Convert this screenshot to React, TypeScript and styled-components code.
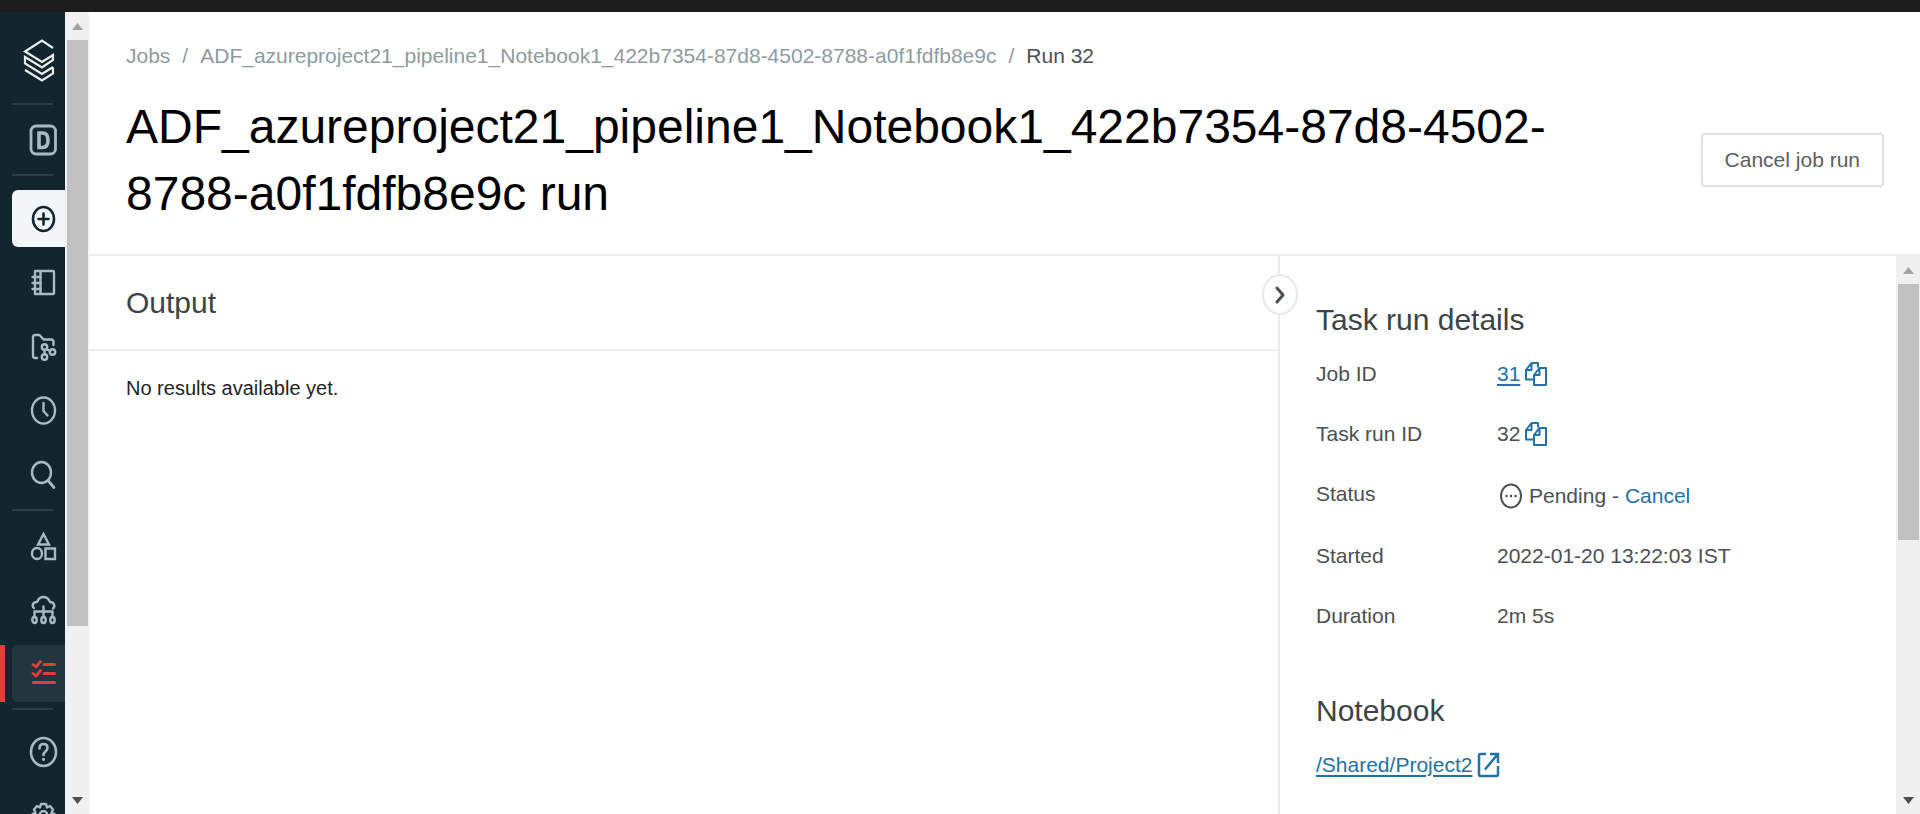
import React from "react";
import styled, { createGlobalStyle, css } from "styled-components";

const GlobalStyle = createGlobalStyle`
  *, *::before, *::after { box-sizing: border-box; }
  html, body { margin: 0; background: #ffffff; }
  body { font-family: "Liberation Sans", Arial, sans-serif; font-size: 21px; line-height: 24px; color: #4b5054; }
  h1, h2, p, dl, dd, ol, ul { margin: 0; padding: 0; }
  ol, ul { list-style: none; }
  svg { display: block; flex: none; }
`;

const Screen = styled.div`
  display: flex;
  flex-direction: column;
  height: 100vh;
  overflow: hidden;
`;

const WindowEdge = styled.div`
  flex: none;
  height: 12px;
  background: #1c1c1c;
`;

const Workspace = styled.div`
  display: flex;
  flex: 1;
  min-height: 0;
`;

const Sidebar = styled.nav`
  flex: none;
  width: 65px;
  overflow: hidden;
  background: #12262f;
`;

const Brand = styled.a`
  display: block;
  padding: 26px 0 20px 22px;
`;

const Rule = styled.hr`
  width: 41px;
  height: 2px;
  margin: 0 0 0 12px;
  border: 0;
  background: #2b3f48;
`;

const NavGroup = styled.ul`
  display: flex;
  flex-direction: column;
  gap: 7px;
  padding: 6px 0;
`;

const CreateGroup = styled(NavGroup)`
  padding: 14px 0 6px;
`;

const HelpGroup = styled(NavGroup)`
  padding-top: 13px;
`;

const NavItem = styled.li<{ $active?: boolean }>`
  padding-left: ${(p) => (p.$active ? 7 : 12)}px;
  border-left: ${(p) => (p.$active ? "5px solid #dc4038" : "0")};
`;

const NavButton = styled.button<{ $tone?: "light" | "active" }>`
  display: flex;
  align-items: center;
  justify-content: flex-start;
  width: 100%;
  height: 57px;
  padding: 0 0 0 17px;
  border: 0;
  border-radius: 6px 0 0 6px;
  background: transparent;
  color: #a9bac2;
  ${(p) => p.$tone === "light" && css`background: #f3f6f8; color: #12262f;`}
  ${(p) => p.$tone === "active" && css`background: #21363f; color: #dc4038;`}
`;

const ScrollRail = styled.div`
  display: flex;
  flex-direction: column;
  flex: none;
  width: 24px;
  background: #f0f0f0;
`;

const ScrollArrow = styled.button`
  display: flex;
  align-items: center;
  justify-content: center;
  height: 28px;
  padding: 0;
  border: 0;
  background: transparent;
`;

const ScrollTrack = styled.div`
  display: flex;
  flex-direction: column;
  flex: 1;
  padding: 0 1px 0 2px;
`;

const Thumb = styled.div<{ $share: number }>`
  flex: ${(p) => p.$share};
  background: #c1c1c1;
`;

const Remainder = styled.div<{ $share: number }>`
  flex: ${(p) => p.$share};
`;

const Page = styled.main`
  display: flex;
  flex-direction: column;
  flex: 1;
  min-width: 0;
`;

const PageHeader = styled.header`
  flex: none;
  padding: 32px 36px 27px 37px;
  border-bottom: 2px solid #ebedee;
`;

const Breadcrumb = styled.ol`
  display: flex;
  gap: 12px;
  color: #8f9b9f;
`;

const CrumbLink = styled.a`
  color: inherit;
  text-decoration: none;
`;

const CurrentCrumb = styled.li`
  color: #4b5054;
`;

const TitleRow = styled.div`
  display: flex;
  align-items: center;
  gap: 120px;
  margin-top: 25px;
`;

const Title = styled.h1`
  flex: 1;
  min-width: 0;
  font-size: 48px;
  font-weight: 400;
  line-height: 67px;
  color: #000000;
`;

const OutlineButton = styled.button`
  flex: none;
  height: 54px;
  padding: 0 22px;
  border: 2px solid #dfe1e2;
  border-radius: 4px;
  background: #ffffff;
  color: #5a5f62;
  font: inherit;
`;

const Panels = styled.div`
  display: flex;
  flex: 1;
  min-height: 0;
`;

const OutputPane = styled.section`
  flex: 1;
  min-width: 0;
`;

const OutputHeader = styled.div`
  padding: 29px 37px 28px;
  border-bottom: 2px solid #ebedee;
`;

const SectionTitle = styled.h2`
  font-size: 30px;
  font-weight: 400;
  line-height: 36px;
  color: #3d4448;
`;

const EmptyMessage = styled.p`
  padding: 25px 37px;
  font-size: 20px;
  color: #1f2326;
`;

const DetailsPane = styled.aside`
  position: relative;
  display: flex;
  flex: none;
  width: 642px;
  border-left: 2px solid #e8eaeb;
`;

const CollapseButton = styled.button`
  position: absolute;
  top: 18px;
  left: -18px;
  display: flex;
  align-items: center;
  justify-content: center;
  width: 36px;
  height: 41px;
  padding: 0;
  border: 2px solid #e6e9ea;
  border-radius: 50%;
  background: #ffffff;
  color: #4b5054;
`;

const DetailsBody = styled.div`
  flex: 1;
  min-width: 0;
  overflow: hidden;
  padding: 46px 36px 0;
`;

const DetailList = styled.dl`
  display: grid;
  grid-template-columns: 181px 1fr;
  row-gap: 36px;
  margin: 24px 0 65px;
`;

const DetailValue = styled.dd`
  display: flex;
  align-items: center;
  gap: 5px;
  height: 24px;
`;

const StatusValue = styled(DetailValue)`
  gap: 6px;
  height: 26px;
  padding: 2px 0 0 2px;
`;

const TextLink = styled.a<{ $underlined?: boolean }>`
  color: #2272a8;
  text-decoration: ${(p) => (p.$underlined ? "underline" : "none")};
  text-decoration-thickness: 2px;
  text-underline-offset: 3px;
`;

const IconButton = styled.button`
  padding: 0;
  border: 0;
  background: transparent;
  color: #2272a8;
`;

const TextButton = styled.button`
  padding: 0;
  border: 0;
  background: transparent;
  color: #2272a8;
  font: inherit;
`;

const NotebookLink = styled.div`
  display: flex;
  align-items: center;
  gap: 5px;
  margin-top: 23px;
  color: #2272a8;
`;

type DrawingProps = { w: number; h: number; stroke?: number; children: React.ReactNode };

const Drawing = ({ w, h, stroke = 2.4, children }: DrawingProps) => (
  <svg width={w} height={h} viewBox={`0 0 ${w} ${h}`} fill="none" stroke="currentColor" strokeWidth={stroke} strokeLinecap="round" strokeLinejoin="round" aria-hidden="true">
    {children}
  </svg>
);

const LogoIcon = () => (
  <svg width="33" height="45" viewBox="0 0 33 45" fill="none" stroke="#e9eff1" strokeWidth="2.200" aria-hidden="true">
    <path d="M31 10 20 2.500 3 13.500 20 24l11-7v5L20 29.500 3 19v6.500L20 36l11-7" />
    <path d="M3 32l17 10.500L31 35.500v-6" />
  </svg>
);

const PersonaIcon = () => (
  <Drawing w={28} h={32} stroke={2.800}>
    <rect x="2" y="2" width="24.500" height="28" rx="5" />
    <path d="M10 9v14.500h3.500q5.500 0 5.500-7.250T13.500 9z" strokeWidth="3.600" strokeLinejoin="miter" />
  </Drawing>
);

const CreateIcon = () => (
  <Drawing w={28} h={30} stroke={2.600}>
    <ellipse cx="14.500" cy="15" rx="10.500" ry="12" />
    <path d="M14.500 9.500v11M9.500 15h10" />
  </Drawing>
);

const NotebookIcon = () => (
  <Drawing w={28} h={30}>
    <path d="M6 3h18q1 0 1 1v21q0 1-1 1H6zM11.500 3v23" />
    <path d="M3.500 9h8M3.500 15h8M3.500 21h8" />
  </Drawing>
);

const ReposIcon = () => (
  <Drawing w={28} h={30}>
    <path d="M8 26H6q-2 0-2-2V5q0-2 2-2h4.500l4 4.500H22q2.500 0 2.500 2.500v3" />
    <circle cx="15.500" cy="15" r="2.700" />
    <circle cx="15.500" cy="25" r="2.700" />
    <circle cx="23.500" cy="20" r="2.700" />
    <path d="M15.500 18v4M17.500 17l3.500 2" />
  </Drawing>
);

const RecentsIcon = () => (
  <Drawing w={28} h={30}>
    <ellipse cx="14.500" cy="14.500" rx="11.500" ry="13" />
    <path d="M14.500 7v8l4 4.500" />
  </Drawing>
);

const SearchIcon = () => (
  <Drawing w={28} h={30}>
    <ellipse cx="12.500" cy="12.500" rx="9.500" ry="10.500" />
    <path d="M19 20.500l6 7" strokeWidth="2.800" />
  </Drawing>
);

const ShapesIcon = () => (
  <svg width="28" height="30" viewBox="0 0 28 30" fill="none" stroke="currentColor" strokeWidth="2.400" aria-hidden="true">
    <path d="M14.500 3 20 13.500H9z" />
    <ellipse cx="8" cy="22.500" rx="5" ry="5.500" />
    <path d="M16.500 17.500H26V28h-9.500z" />
  </svg>
);

const ComputeIcon = () => (
  <Drawing w={28} h={30}>
    <path d="M5 13q-2-1-1-4 1-2 4-2 2-5 6.500-5T21 7q3 0 4 2.500t-1 4" />
    <path d="M14.500 11.500V22M5.500 22v-5.500h18V22" />
    <ellipse cx="5.500" cy="25" rx="2.200" ry="3" />
    <ellipse cx="14.500" cy="25" rx="2.200" ry="3" />
    <ellipse cx="23.500" cy="25" rx="2.200" ry="3" />
  </Drawing>
);

const JobsIcon = () => (
  <Drawing w={28} h={30} stroke={3.200}>
    <path d="M15 5.500h10.500M15 14.500h10.500M4.500 23.500h21" />
    <path d="M4 5.500 7 8l4.500-5.500M4 14.500 7 17l4.500-5.500" strokeWidth="2.800" />
  </Drawing>
);

const HelpIcon = () => (
  <Drawing w={30} h={32} stroke={2.600}>
    <ellipse cx="14.500" cy="16" rx="12.500" ry="14" />
    <path d="M10.500 12.500q0-4.500 4-4.500t4 4q0 2-2 3.500t-2 3.500" />
    <path d="M14.500 23.200v.4" strokeWidth="3" />
  </Drawing>
);

const SettingsIcon = () => (
  <Drawing w={28} h={30}>
    <path d="M12 3h5l1 3.500 3-1.500 3 3.500-1.500 3.500 3 1v4.500l-3 1.500 1.500 3.500-3 3-3-1.500-1 3.500h-5l-1-3.500-3 1.500-3-3L6.500 19l-3-1.500V13l3-1L5 8.500 8 5l3 1.500z" />
    <ellipse cx="14.500" cy="15" rx="4" ry="5" />
  </Drawing>
);

const CopyIcon = () => (
  <svg width="22" height="24" viewBox="0 0 22 24" fill="none" stroke="currentColor" strokeWidth="2" strokeLinejoin="round" aria-hidden="true">
    <path d="M9 17.500H1V8l5.500-7H13v4.500M1 8h5.500V1" />
    <path d="M14.500 6H21v17H9V13zM9 13h5.500V6" />
  </svg>
);

const PendingIcon = () => (
  <Drawing w={24} h={26} stroke={2}>
    <ellipse cx="12" cy="13" rx="10" ry="11.500" />
    <path d="M7.500 13h.1M12 13h.1M16.500 13h.1" strokeWidth="2.400" />
  </Drawing>
);

const OpenIcon = () => (
  <svg width="23" height="26" viewBox="0 0 23 26" fill="none" stroke="currentColor" strokeWidth="2.500" aria-hidden="true">
    <path d="M9 2H3.500Q2 2 2 3.500v19Q2 24 3.500 24h16q1.500 0 1.500-1.500V14" />
    <path d="M13 2h8v9M20.500 2.500 8 17.500" />
  </svg>
);

const Scrollbar = ({ thumb, rest }: { thumb: number; rest: number }) => (
  <ScrollRail>
    <ScrollArrow type="button" aria-label="Scroll up">
      <svg width="11" height="7" viewBox="0 0 11 7" aria-hidden="true"><path d="M0 7 5.500 0 11 7z" fill="#a3a3a3" /></svg>
    </ScrollArrow>
    <ScrollTrack>
      <Thumb $share={thumb} />
      <Remainder $share={rest} />
    </ScrollTrack>
    <ScrollArrow type="button" aria-label="Scroll down">
      <svg width="11" height="7" viewBox="0 0 11 7" aria-hidden="true"><path d="M0 0h11L5.500 7z" fill="#4f4f4f" /></svg>
    </ScrollArrow>
  </ScrollRail>
);

const workspaceLinks = [
  { label: "Workspace", icon: <NotebookIcon /> },
  { label: "Repos", icon: <ReposIcon /> },
  { label: "Recents", icon: <RecentsIcon /> },
  { label: "Search", icon: <SearchIcon /> },
];

const computeLinks = [
  { label: "Data", icon: <ShapesIcon /> },
  { label: "Compute", icon: <ComputeIcon /> },
  { label: "Jobs", icon: <JobsIcon />, active: true },
];

const helpLinks = [
  { label: "Help", icon: <HelpIcon /> },
  { label: "Settings", icon: <SettingsIcon /> },
];

const jobName = "ADF_azureproject21_pipeline1_Notebook1_422b7354-87d8-4502-8788-a0f1fdfb8e9c";

export default function App() {
  return (
    <Screen>
      <GlobalStyle />
      <WindowEdge />
      <Workspace>
        <Sidebar aria-label="Main">
          <Brand href="#" aria-label="Home"><LogoIcon /></Brand>
          <Rule />
          <NavGroup>
            <NavItem>
              <NavButton type="button" aria-label="Persona"><PersonaIcon /></NavButton>
            </NavItem>
          </NavGroup>
          <Rule />
          <CreateGroup>
            <NavItem>
              <NavButton type="button" aria-label="Create" $tone="light"><CreateIcon /></NavButton>
            </NavItem>
            {workspaceLinks.map((item) => (
              <NavItem key={item.label}>
                <NavButton type="button" aria-label={item.label}>{item.icon}</NavButton>
              </NavItem>
            ))}
          </CreateGroup>
          <Rule />
          <NavGroup>
            {computeLinks.map((item) => (
              <NavItem key={item.label} $active={item.active}>
                <NavButton type="button" aria-label={item.label} $tone={item.active ? "active" : undefined}>{item.icon}</NavButton>
              </NavItem>
            ))}
          </NavGroup>
          <Rule />
          <HelpGroup>
            {helpLinks.map((item) => (
              <NavItem key={item.label}>
                <NavButton type="button" aria-label={item.label}>{item.icon}</NavButton>
              </NavItem>
            ))}
          </HelpGroup>
        </Sidebar>
        <Scrollbar thumb={11} rest={3} />
        <Page>
          <PageHeader>
            <nav aria-label="Breadcrumb">
              <Breadcrumb>
                <li><CrumbLink href="#">Jobs</CrumbLink></li>
                <li aria-hidden="true">/</li>
                <li><CrumbLink href="#">{jobName}</CrumbLink></li>
                <li aria-hidden="true">/</li>
                <CurrentCrumb aria-current="page">Run 32</CurrentCrumb>
              </Breadcrumb>
            </nav>
            <TitleRow>
              <Title>{`${jobName} run`}</Title>
              <OutlineButton type="button">Cancel job run</OutlineButton>
            </TitleRow>
          </PageHeader>
          <Panels>
            <OutputPane>
              <OutputHeader><SectionTitle>Output</SectionTitle></OutputHeader>
              <EmptyMessage>No results available yet.</EmptyMessage>
            </OutputPane>
            <DetailsPane>
              <CollapseButton type="button" aria-label="Collapse details">
                <Drawing w={12} h={20} stroke={3}><path d="M3 3l6 7-6 7" /></Drawing>
              </CollapseButton>
              <DetailsBody>
                <SectionTitle>Task run details</SectionTitle>
                <DetailList>
                  <dt>Job ID</dt>
                  <DetailValue>
                    <TextLink href="#" $underlined>31</TextLink>
                    <IconButton type="button" aria-label="Copy job ID"><CopyIcon /></IconButton>
                  </DetailValue>
                  <dt>Task run ID</dt>
                  <DetailValue>
                    <span>32</span>
                    <IconButton type="button" aria-label="Copy task run ID"><CopyIcon /></IconButton>
                  </DetailValue>
                  <dt>Status</dt>
                  <StatusValue>
                    <PendingIcon />
                    <span>Pending -</span>
                    <TextButton type="button">Cancel</TextButton>
                  </StatusValue>
                  <dt>Started</dt>
                  <DetailValue>2022-01-20 13:22:03 IST</DetailValue>
                  <dt>Duration</dt>
                  <DetailValue>2m 5s</DetailValue>
                </DetailList>
                <SectionTitle>Notebook</SectionTitle>
                <NotebookLink>
                  <TextLink href="#" $underlined>/Shared/Project2</TextLink>
                  <OpenIcon />
                </NotebookLink>
              </DetailsBody>
              <Scrollbar thumb={25} rest={24} />
            </DetailsPane>
          </Panels>
        </Page>
      </Workspace>
    </Screen>
  );
}
